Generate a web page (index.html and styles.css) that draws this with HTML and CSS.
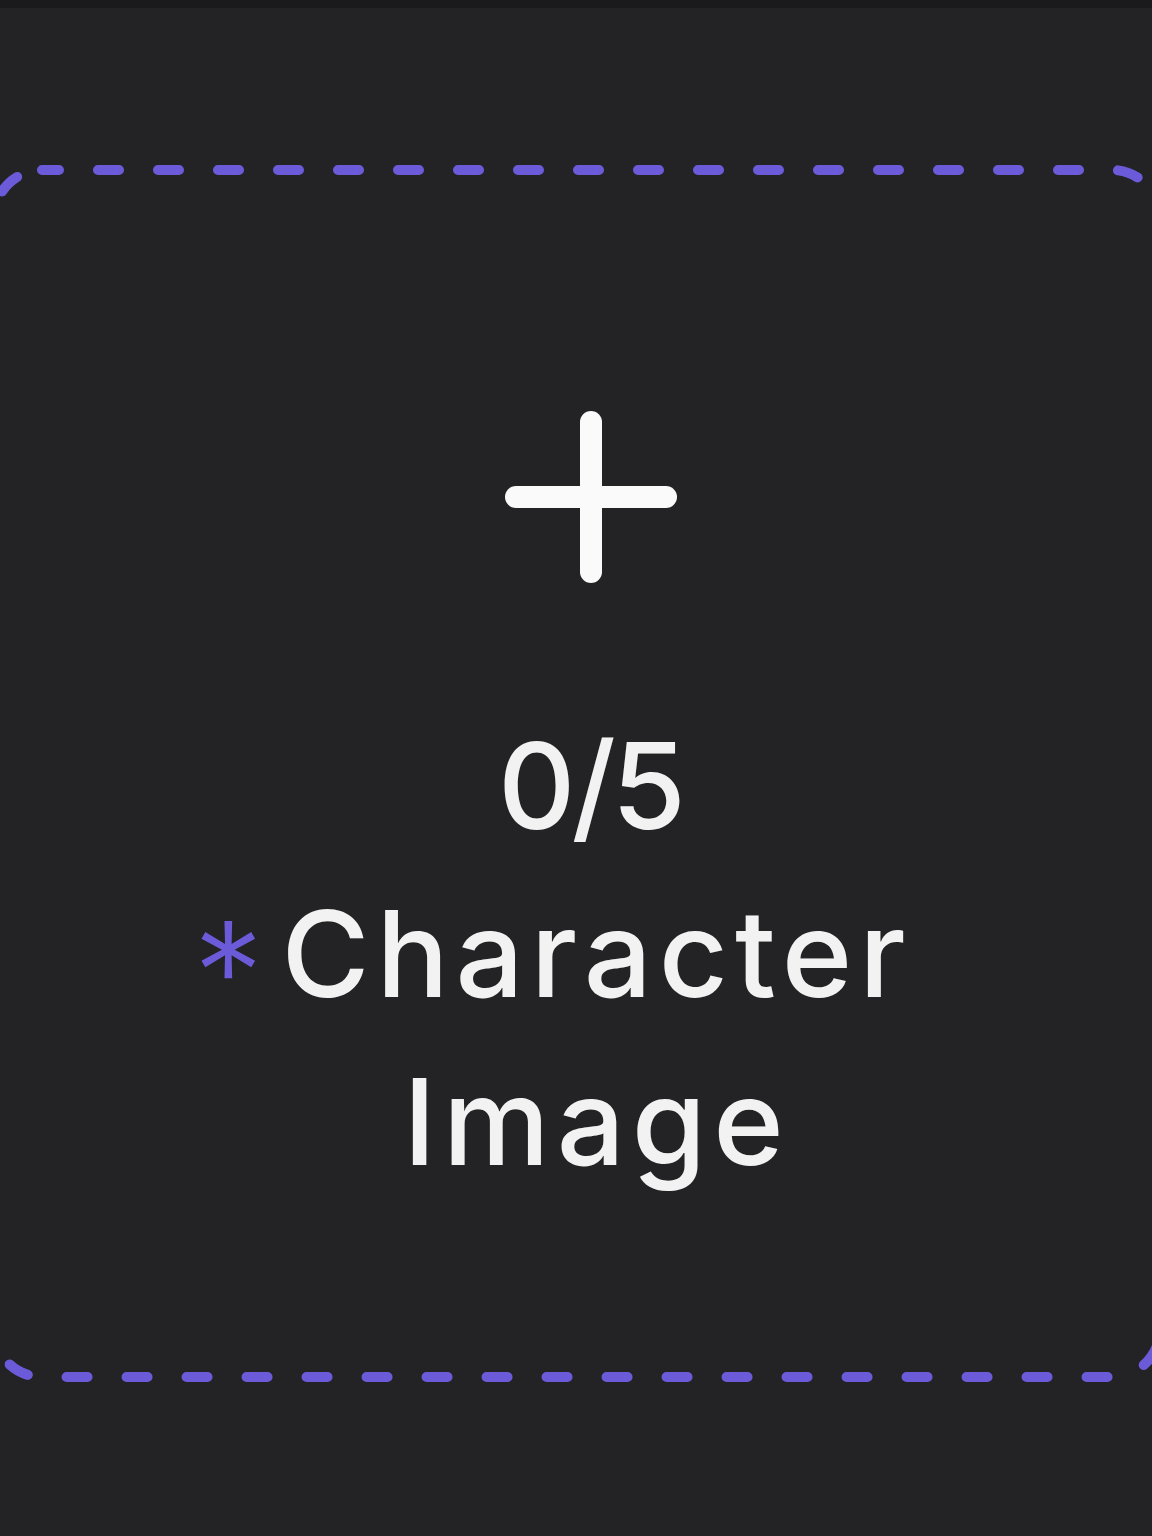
FILE: index.html
```html
<!DOCTYPE html>
<html lang="en">
<head>
  <meta charset="UTF-8" />
  <meta name="viewport" content="width=device-width, initial-scale=1.0"/>
  <title>Upload Character Image</title>
  <link rel="stylesheet" href="styles.css">
</head>
<body>
  <div class="topbar"></div>

  <div class="page">
    <div class="upload-box">
      <svg class="upload-border" width="1176" height="1217" viewBox="0 0 1176 1217">
        <rect x="5" y="5" width="1166" height="1207" rx="48" ry="48" />
      </svg>

      <div class="upload-content">
        <svg class="plus-icon" width="172" height="172" viewBox="0 0 172 172">
          <line x1="86" y1="11" x2="86" y2="161" />
          <line x1="11" y1="86" x2="161" y2="86" />
        </svg>

        <div class="count">0/5</div>
        <div class="label">
          <span class="label-line"><span class="required">*</span>Character</span>
          <span class="label-line">Image</span>
        </div>
      </div>
    </div>
  </div>
</body>
</html>
```

FILE: styles.css
```css
:root {
  --bg: #232325;
  --bg-dark: #1a1a1c;
  --accent: #6b5bd9;
  --text: #f2f2f2;
}

* {
  box-sizing: border-box;
  margin: 0;
  padding: 0;
}

html, body {
  height: 100%;
}

body {
  background-color: var(--bg);
  font-family: 'Inter', 'Noto Sans', sans-serif;
  color: var(--text);
  overflow: hidden;
}

.topbar {
  height: 8px;
  background-color: var(--bg-dark);
}

.page {
  padding-top: 157px;
}

.upload-box {
  position: relative;
  width: 1176px;
  height: 1217px;
  margin-left: -11px;
  padding: 246px 0 0 28px;
}

.upload-border {
  position: absolute;
  top: 0;
  left: 0;
  pointer-events: none;
}

.upload-border rect {
  fill: none;
  stroke: var(--accent);
  stroke-width: 10;
  stroke-dasharray: 21 39;
  stroke-dashoffset: 4;
  stroke-linecap: round;
}

.upload-content {
  display: flex;
  flex-direction: column;
  align-items: center;
}

.plus-icon {
  display: block;
  margin-bottom: 119px;
}

.plus-icon line {
  stroke: #fafafa;
  stroke-width: 22;
  stroke-linecap: round;
}

.count,
.label {
  font-size: 120px;
  font-weight: 500;
  line-height: 168px;
  text-align: center;
}

.count {
  letter-spacing: -4px;
  margin-right: 2px;
}

.label {
  display: flex;
  flex-direction: column;
  align-items: center;
  letter-spacing: 7px;
}

.label-line {
  position: relative;
  margin-right: -12px;
}

.required {
  position: absolute;
  right: 100%;
  top: 18px;
  margin-right: 18px;
  color: var(--accent);
  font-size: 140px;
  font-weight: 300;
  letter-spacing: 0;
  line-height: 168px;
}
```
